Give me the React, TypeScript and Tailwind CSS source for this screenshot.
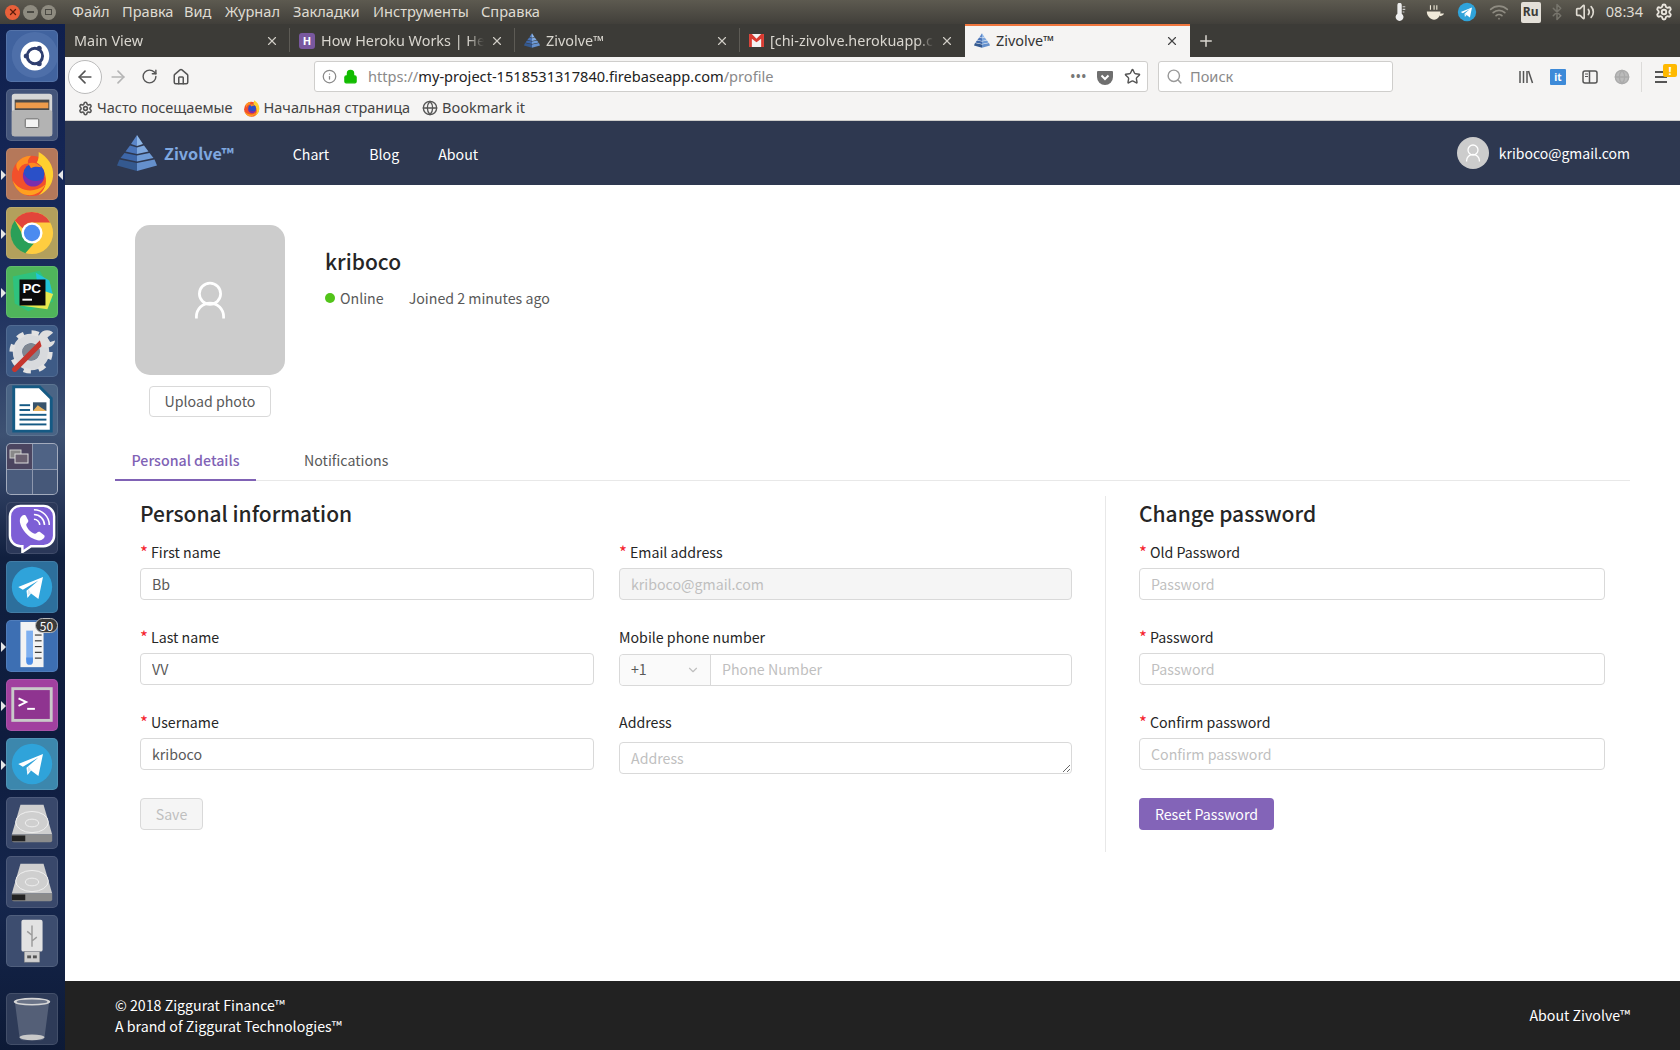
import React from 'react';
import {
  ArrowLeft,
  ArrowRight,
  Bluetooth,
  ChevronDown,
  Globe,
  Home,
  Info,
  Lock,
  Plus,
  RotateCw,
  Search,
  Settings,
  Star,
  Volume2,
  Wifi,
  X,
} from 'lucide-react';

const Pyramid = ({ className }: { className: string }) => (
  <svg viewBox="0 0 40 36" className={className}>
    <polygon points="20,0 14,9 20,11" fill="#5b86c9" />
    <polygon points="20,0 26,9 20,11" fill="#8fb6e6" />
    <polygon points="13,10.5 20,12.5 20,19 8.5,16.5" fill="#4a74b8" />
    <polygon points="27,10.5 20,12.5 20,19 31.5,16.5" fill="#7fa8de" />
    <polygon points="7.5,18 20,20.5 20,26.5 3.5,23" fill="#3d66a8" />
    <polygon points="32.5,18 20,20.5 20,26.5 36.5,23" fill="#6f9bd6" />
    <polygon points="2.5,24.5 20,28 20,36 0,30.5" fill="#34598f" />
    <polygon points="37.5,24.5 20,28 20,36 40,30.5" fill="#6590cc" />
  </svg>
);

const FirefoxGlyph = ({ size }: { size: number }) => (
  <svg viewBox="0 0 48 48" width={size} height={size}>
    <circle cx="24" cy="26" r="21" fill="#f2502b" />
    <path d="M31 1c9 5 16 14 15 25-1 10-7 17-15 20 6-5 9-12 7-20-1-6-4-11-9-14 2-3 2-7 2-11z" fill="#ffd02e" />
    <path d="M8 13c3-5 9-8 15-8-3 3-4 6-3 8-5 0-9 3-10 8-2-2-3-5-2-8z" fill="#ff9022" />
    <circle cx="26" cy="24" r="11" fill="#2a50c8" />
    <path d="M15 22c2 7 8 10 15 9 3 0 5-2 7-4-1 6-7 11-14 10-6-1-10-8-8-15z" fill="#7a2eae" />
    <path d="M20 13c5-2 11 0 14 4-4-1-8-1-11 1z" fill="#ff8a1f" />
    <path d="M4 31c6 10 21 15 34 4-4 8-11 12-19 11C11 45 6 38 4 31z" fill="#ffa01f" />
  </svg>
);

const TelegramGlyph = ({ size }: { size: number }) => (
  <svg viewBox="0 0 48 48" width={size} height={size}>
    <circle cx="24" cy="24" r="22" fill="#2fa3da" />
    <path d="M9 24l27-11-5 24-8-6-4 5-1-8 13-11-17 10z" fill="#fff" />
    <path d="M19 33l1-7 3 5z" fill="#d5e8f3" />
  </svg>
);

const Tile = ({
  bg,
  children,
  className = '',
  running,
}: {
  bg: string;
  children: React.ReactNode;
  className?: string;
  running?: boolean;
}) => (
  <div className={`relative w-[52px] h-[52px] rounded-[5px] flex items-center justify-center border border-white/10 ${bg} ${className}`}>
    {children}
    {running && (
      <span className="absolute -left-[6px] top-[21px] w-0 h-0 border-y-[5px] border-y-transparent border-l-[5px] border-l-[#e6e6e6]" />
    )}
  </div>
);

const DiskIcon = () => (
  <svg viewBox="0 0 52 52" width="52" height="52">
    <path d="M14 7h24l9 31H5z" fill="#cfcfcf" />
    <path d="M5 38h42v6a2 2 0 0 1-2 2H7a2 2 0 0 1-2-2z" fill="#8c8c8c" />
    <rect x="5" y="39" width="14" height="6" fill="#222" />
    <ellipse cx="26" cy="25" rx="17" ry="11" fill="none" stroke="#f0f0f0" strokeWidth="1" />
    <ellipse cx="26" cy="26" rx="7" ry="4" fill="none" stroke="#efefef" strokeWidth="1" />
  </svg>
);

const launcherTop = [
  <Tile key="ubuntu" bg="bg-[#41639f]">
    <svg viewBox="0 0 52 52" width="50" height="50">
      <circle cx="29" cy="25" r="24" fill="#5b7bb4" opacity="0.5" />
      <circle cx="29" cy="26" r="15" fill="#fff" />
      <circle cx="29" cy="26" r="8" fill="none" stroke="#2f3f70" strokeWidth="3" />
      <circle cx="20" cy="26" r="2.6" fill="#2f3f70" />
      <circle cx="33.5" cy="18" r="2.6" fill="#2f3f70" />
      <circle cx="33.5" cy="34" r="2.6" fill="#2f3f70" />
    </svg>
  </Tile>,
  <Tile key="files" bg="bg-[#43547a]">
    <svg viewBox="0 0 52 52" width="50" height="50">
      <rect x="5" y="4" width="42" height="44" rx="3" fill="#d6d6d6" />
      <rect x="8" y="10" width="36" height="11" fill="#4a4a4a" />
      <rect x="9" y="13" width="34" height="6" fill="#ee9b4b" />
      <rect x="5" y="21" width="42" height="27" rx="2" fill="#b3b3b3" />
      <rect x="19" y="30" width="14" height="9" rx="1" fill="#f2f2f2" stroke="#666" />
    </svg>
  </Tile>,
  <Tile key="firefox" bg="bg-[#b5785a]" running>
    <FirefoxGlyph size={46} />
    <span className="absolute -right-[6px] top-[21px] w-0 h-0 border-y-[5px] border-y-transparent border-r-[5px] border-r-[#e6e6e6]" />
  </Tile>,
  <Tile key="chrome" bg="bg-[#b3a05c]" running>
    <svg viewBox="0 0 48 48" width="46" height="46">
      <circle cx="24" cy="24" r="22" fill="#ffcd40" />
      <path d="M24 2a22 22 0 0 1 19 11H24a11 11 0 0 0-10 6L6 11A22 22 0 0 1 24 2z" fill="#e2453a" />
      <path d="M6 11l9 16a11 11 0 0 0 11 8l-9 10A22 22 0 0 1 6 11z" fill="#2a9f58" />
      <circle cx="24" cy="24" r="11" fill="#fff" />
      <circle cx="24" cy="24" r="8.5" fill="#4b8bf0" />
    </svg>
  </Tile>,
  <Tile key="pycharm" bg="bg-[#4fb55b]" running>
    <svg viewBox="0 0 52 52" width="50" height="50">
      <polygon points="6,10 34,4 44,20 48,36 22,46 8,38" fill="#2ec27e" />
      <polygon points="30,6 44,14 48,30 32,22" fill="#21c4d8" />
      <polygon points="14,40 42,44 48,28 30,22" fill="#e8ea4e" />
      <rect x="13" y="13" width="27" height="27" fill="#0b0b0b" />
      <text x="16" y="27" fill="#fff" fontSize="14" fontWeight="700" fontFamily="'Liberation Sans', sans-serif">PC</text>
      <rect x="16" y="33" width="10" height="2" fill="#fff" />
    </svg>
  </Tile>,
  <Tile key="settings" bg="bg-[#3e5b86]">
    <svg viewBox="0 0 52 52" width="50" height="50">
      <circle cx="25" cy="27" r="14" fill="none" stroke="#d8dadd" strokeWidth="10" />
      <circle cx="25" cy="27" r="20" fill="none" stroke="#e2e2e2" strokeWidth="5" strokeDasharray="7.5 8.2" />
      <circle cx="25" cy="27" r="9" fill="#7f8690" />
      <path d="M8 45L37 16" stroke="#c5362e" strokeWidth="5.5" strokeLinecap="round" />
      <path d="M33 11a9 9 0 0 1 15-4l-6 5 2 5 6-2a9 9 0 0 1-14 6z" fill="#dedede" />
    </svg>
  </Tile>,
  <Tile key="writer" bg="bg-[#4a6485]">
    <svg viewBox="0 0 52 52" width="50" height="50">
      <path d="M7 2h27l12 12v34H7z" fill="#fff" stroke="#155a84" strokeWidth="3" />
      <rect x="27" y="18" width="14" height="9" fill="#37536b" />
      <path d="M27 27l5-6 4 3 5 3z" fill="#e9b25c" />
      {[20, 25].map((y) => (
        <rect key={y} x="13" y={y} width="11" height="2" fill="#155a84" />
      ))}
      {[30, 35, 40].map((y) => (
        <rect key={y} x="13" y={y} width="28" height="2" fill="#155a84" />
      ))}
    </svg>
  </Tile>,
  <div key="workspaces" className="w-[52px] h-[52px] rounded-[5px] border border-white/20 bg-[#8d97ad] grid grid-cols-2 grid-rows-2 gap-px overflow-hidden">
    <div className="bg-[#4b4560] flex items-center justify-center">
      <svg viewBox="0 0 22 22" width="22" height="22">
        <rect x="2" y="5" width="11" height="8" fill="#888" stroke="#ccc" />
        <rect x="7" y="9" width="13" height="9" fill="#6a6070" stroke="#ddd" />
      </svg>
    </div>
    <div className="bg-[#4f6385]" />
    <div className="bg-[#4a5c7d]" />
    <div className="bg-[#465879]" />
  </div>,
  <Tile key="viber" bg="bg-[#2b3859]">
    <svg viewBox="0 0 52 52" width="50" height="50">
      <path d="M14 3h24a11 11 0 0 1 11 11v20a11 11 0 0 1-11 11H25l-9 6v-6h-2A11 11 0 0 1 3 34V14A11 11 0 0 1 14 3z" fill="#7d5fd6" stroke="#fff" strokeWidth="2.5" />
      <path d="M15 14c2-2 4-2 5 0l2 4c1 2-2 3-2 5 1 4 5 8 9 9 2 0 3-3 5-2l4 3c2 1 1 3 0 4-3 3-7 2-11 0-6-3-11-9-13-15-1-3-1-6 1-8z" fill="#fff" />
      <path d="M28 12a11 11 0 0 1 11 11M28 17a6 6 0 0 1 6 6M28 7a16 16 0 0 1 16 16" fill="none" stroke="#fff" strokeWidth="1.6" />
    </svg>
  </Tile>,
  <Tile key="telegram" bg="bg-[#2d6f9c]">
    <TelegramGlyph size={44} />
  </Tile>,
  <div key="thermo" className="relative">
    <Tile bg="bg-[#3d6fb3]" running>
      <svg viewBox="0 0 52 52" width="50" height="50">
        <rect x="14" y="1" width="24" height="47" fill="#f3f3f3" />
        <rect x="20" y="10" width="7" height="31" fill="#7fb0f0" />
        <path d="M20 38h7v4a3.5 3.5 0 0 1-7 0z" fill="#4f8fe8" />
        {[14, 20, 26, 32, 38].map((y) => (
          <rect key={y} x="29" y={y} width="7" height="1.2" fill="#333" />
        ))}
      </svg>
    </Tile>
    <span className="absolute -top-[2px] right-0 w-[23px] h-[15px] rounded-full bg-[#3a3a3a] border border-[#bbb] text-white text-[12px] leading-[13px] text-center">
      50
    </span>
  </div>,
  <Tile key="terminal" bg="bg-[#a1409f]" running>
    <svg viewBox="0 0 52 52" width="50" height="50">
      <rect x="6" y="9" width="40" height="33" fill="#8f3490" stroke="#c9c9c9" strokeWidth="3" />
      <path d="M12 19l8 4-8 4" fill="none" stroke="#fff" strokeWidth="2" />
      <rect x="21" y="29" width="8" height="2" fill="#fff" />
    </svg>
  </Tile>,
  <Tile key="telegram2" bg="bg-[#3c87ad]" running>
    <TelegramGlyph size={44} />
  </Tile>,
  <Tile key="disk1" bg="bg-[#39486b]">
    <DiskIcon />
  </Tile>,
  <Tile key="disk2" bg="bg-[#39486b]">
    <DiskIcon />
  </Tile>,
  <Tile key="usb" bg="bg-[#3d4d6f]">
    <svg viewBox="0 0 52 52" width="50" height="50">
      <rect x="15" y="4" width="22" height="33" rx="2" fill="#e2e2e2" />
      <rect x="18" y="37" width="16" height="11" fill="#cfcfcf" stroke="#888" strokeWidth="0.5" />
      <rect x="21" y="41" width="4" height="3" fill="#555" />
      <rect x="27" y="41" width="4" height="3" fill="#555" />
      <path d="M26 10v22M26 20l-5-4M26 26l5-4" stroke="#9a9a9a" strokeWidth="1.5" fill="none" />
    </svg>
  </Tile>,
];

const Launcher = () => (
  <aside className="w-[65px] shrink-0 flex flex-col items-start pt-[6px] pb-[5px] pl-[6px] gap-[7px] bg-[linear-gradient(180deg,#0f1f4d_0%,#1a2c5c_25%,#3d5172_40%,#2a3a5c_46%,#11203f_52%,#0e1c3e_70%,#15264d_85%,#0d1a36_100%)]">
    {launcherTop}
    <Tile bg="bg-[#2e3b58]" className="mt-auto">
      <svg viewBox="0 0 52 52" width="50" height="50">
        <path d="M8 7h36l-5 38a4 4 0 0 1-4 3H17a4 4 0 0 1-4-3z" fill="#9aa3b3" opacity="0.35" />
        <ellipse cx="26" cy="8" rx="19" ry="4" fill="#d6d6d6" />
        <ellipse cx="26" cy="8" rx="16" ry="2.4" fill="#6b7488" />
        <ellipse cx="26" cy="45" rx="13" ry="3" fill="#c9c9c9" />
      </svg>
    </Tile>
  </aside>
);

const menu = [
  ['Файл', 'w-[50px]'],
  ['Правка', 'w-[62px]'],
  ['Вид', 'w-[41px]'],
  ['Журнал', 'w-[68px]'],
  ['Закладки', 'w-[80px]'],
  ['Инструменты', 'w-[108px]'],
  ['Справка', 'w-[70px]'],
];

const TopBar = () => (
  <header className="h-[24px] flex items-center bg-[linear-gradient(180deg,#5d5a50,#413f3a)] text-[#dfdbd2] font-['Noto_Sans',sans-serif] text-[14.6px]">
    <div className="w-[72px] pl-[5px] flex items-center gap-[3px]">
      <span className="w-[15px] h-[15px] rounded-full bg-[#e9603a] text-[#5c1d0c] flex items-center justify-center">
        <X size={10} strokeWidth={3} />
      </span>
      <span className="w-[15px] h-[15px] rounded-full bg-[#8e8b80] flex items-center justify-center">
        <span className="w-[7px] h-[2px] bg-[#4b4a44]" />
      </span>
      <span className="w-[15px] h-[15px] rounded-full bg-[#8e8b80] flex items-center justify-center">
        <span className="w-[7px] h-[6px] border border-[#4b4a44]" />
      </span>
    </div>
    {menu.map(([label, width]) => (
      <span key={label} className={width}>
        {label}
      </span>
    ))}
    <div className="ml-auto flex items-center h-full pr-[7px]">
      <svg viewBox="0 0 16 20" width="14" height="18" className="mr-[18px]">
        <path d="M5 2a2.5 2.5 0 0 1 5 0v10a4.5 4.5 0 1 1-5 0z" fill="#eee" />
        <path d="M11 4h3M11 7h3M11 10h2" stroke="#ccc" strokeWidth="1.2" />
      </svg>
      <svg viewBox="0 0 22 18" width="20" height="17" className="mr-[12px]">
        <path d="M2 8h15c0 5-3 9-7 9S2 13 2 8z" fill="#efe9d8" />
        <path d="M16 10h5c-1 2-3 3-5 3z" fill="#efe9d8" />
        <path d="M6 1v5M10 1v5M13 1v5" stroke="#efe9d8" strokeWidth="1.2" />
      </svg>
      <TelegramGlyph size={20} />
      <Wifi size={20} className="ml-[12px] text-[#8f8c82]" />
      <span className="ml-[12px] w-[20px] h-[21px] rounded-[2px] bg-[#e4e0d8] text-[#3c3b37] text-[12px] font-bold flex items-center justify-center">
        Ru
      </span>
      <Bluetooth size={18} className="ml-[7px] text-[#77756c]" />
      <Volume2 size={20} className="ml-[9px] text-[#dfdbd2]" />
      <span className="ml-[11px] text-[14.6px]">08:34</span>
      <Settings size={18} strokeWidth={2.5} className="ml-[12px] text-[#e8e4dc]" />
    </div>
  </header>
);

const tabs: { title: string; icon: React.ReactNode }[] = [
  { title: 'Main View', icon: null },
  {
    title: 'How Heroku Works | He',
    icon: (
      <span className="w-[16px] h-[16px] rounded-[3px] bg-[#79589f] text-white text-[11px] font-bold leading-[16px] text-center shrink-0">
        H
      </span>
    ),
  },
  { title: 'Zivolve™', icon: <Pyramid className="w-[16px] h-[15px] shrink-0" /> },
  {
    title: '[chi-zivolve.herokuapp.c',
    icon: (
      <svg viewBox="0 0 16 14" width="15" height="13" className="shrink-0">
        <rect width="16" height="14" fill="#f2f2f2" />
        <path d="M0 0h3l5 5 5-5h3v14h-3V5L8 9 3 5v9H0z" fill="#d93a30" />
      </svg>
    ),
  },
];

const TabStrip = () => (
  <div className="h-[33px] flex bg-[#3c3b37] text-[14.4px] font-['Noto_Sans',sans-serif] text-[#d9d6cf]">
    {tabs.map((tab, i) => (
      <div key={i} className="relative w-[225px] flex items-center pl-[9px] pr-[11px] gap-[6px]">
        {tab.icon}
        <span className="flex-1 min-w-0 whitespace-nowrap overflow-hidden [mask-image:linear-gradient(to_right,black_90%,transparent)]">
          {tab.title}
        </span>
        <X size={14} className="text-[#cfccc5] shrink-0" />
        {i < 3 && <span className="absolute right-0 top-[4px] w-px h-[24px] bg-[#5d5b55]" />}
      </div>
    ))}
    <div className="w-[225px] flex items-center pl-[9px] pr-[11px] pb-[2px] gap-[6px] bg-[#f5f4f3] border-t-2 border-[#f0763e] text-[#333]">
      <Pyramid className="w-[16px] h-[15px] shrink-0" />
      <span className="flex-1">Zivolve™</span>
      <X size={14} className="text-[#444]" />
    </div>
    <Plus size={18} className="ml-[7px] mt-[8px] text-[#d9d6cf]" />
  </div>
);

const Toolbar = () => (
  <div className="h-[39px] flex items-center bg-[#f5f4f3] text-[#555] font-['Noto_Sans',sans-serif]">
    <div className="w-[34px] h-[34px] ml-[3px] rounded-full bg-white border border-[#bbb] flex items-center justify-center shrink-0">
      <ArrowLeft size={20} className="text-[#555]" />
    </div>
    <ArrowRight size={20} className="ml-[6px] text-[#b5b5b5]" />
    <RotateCw size={17} className="ml-[13px]" />
    <Home size={18} className="ml-[14px]" />
    <div className="ml-[124px] w-[834px] h-[31px] bg-white border border-[#cfcecc] rounded-[3px] flex items-center pl-[3px] pr-[6px] shrink-0">
      <Info size={15} className="ml-[4px] text-[#888]" />
      <Lock size={15} className="ml-[6px] text-[#12bc00] fill-[#12bc00]" />
      <span className="ml-[10px] text-[14.6px] whitespace-nowrap text-[#8a8a8a]">
        https://<span className="text-[#222]">my-project-1518531317840.firebaseapp.com</span>/profile
      </span>
      <span className="ml-auto text-[#777] tracking-[1px] text-[12px] font-bold">•••</span>
      <svg viewBox="0 0 16 16" width="16" height="16" className="ml-[10px]">
        <path d="M1 2h14a1 1 0 0 1 1 1v5a8 8 0 0 1-16 0V3a1 1 0 0 1 1-1z" fill="#6f6f6f" />
        <path d="M4.5 6.5L8 10l3.5-3.5" stroke="#fff" strokeWidth="2" fill="none" />
      </svg>
      <Star size={17} className="ml-[11px] text-[#555]" />
    </div>
    <div className="ml-[10px] w-[235px] h-[31px] bg-white border border-[#cfcecc] rounded-[3px] flex items-center pl-[7px] text-[14.6px] text-[#8a8a8a] shrink-0">
      <Search size={17} className="text-[#999]" />
      <span className="ml-[7px]">Поиск</span>
    </div>
    <div className="ml-auto flex items-center pr-[13px]">
      <svg viewBox="0 0 16 16" width="16" height="16" className="text-[#555]">
        <path d="M2 2v12M5.5 2v12M9 2v12M10.5 2l4 12" stroke="currentColor" strokeWidth="1.5" fill="none" />
      </svg>
      <span className="ml-[16px] w-[16px] h-[16px] rounded-[1px] bg-[#3d8ad8] text-white text-[10px] font-bold leading-[16px] text-center">it</span>
      <svg viewBox="0 0 16 16" width="16" height="16" className="ml-[16px]">
        <rect x="1" y="2" width="14" height="12" rx="2" fill="none" stroke="#555" strokeWidth="1.5" />
        <path d="M7.5 2v12" stroke="#555" strokeWidth="1.5" />
        <path d="M3 5h3M3 7.5h3" stroke="#555" strokeWidth="1" />
      </svg>
      <Globe size={16} className="ml-[16px] text-[#aaa] fill-[#bbb]" />
      <span className="ml-[11px] w-px h-[30px] bg-[#dcdbd9]" />
      <span className="relative ml-[13px] flex flex-col gap-[3px]">
        <span className="w-[12px] h-[2px] bg-[#555]" />
        <span className="w-[12px] h-[2px] bg-[#555]" />
        <span className="w-[12px] h-[2px] bg-[#555]" />
        <span className="absolute -top-[7px] left-[8px] w-[14px] h-[13px] rounded-[2px] bg-[#ffb900] text-white text-[11px] font-bold leading-[13px] text-center">!</span>
      </span>
    </div>
  </div>
);

const Bookmarks = () => (
  <div className="h-[25px] flex items-center pl-[13px] bg-[#f5f4f3] border-b border-[#cdccca] text-[14.5px] text-[#444] font-['Noto_Sans',sans-serif]">
    <Settings size={15} strokeWidth={2.5} className="mr-[4px] text-[#555]" />
    <span>Часто посещаемые</span>
    <span className="ml-[10px] mr-[4px] flex">
      <FirefoxGlyph size={17} />
    </span>
    <span>Начальная страница</span>
    <Globe size={16} className="ml-[12px] mr-[4px] text-[#555]" />
    <span>Bookmark it</span>
  </div>
);

const AvatarGlyph = ({ size }: { size: number }) => (
  <svg viewBox="0 0 40 44" width={size} height={size * 1.1} fill="none" stroke="#fff" strokeWidth="3.2">
    <circle cx="20" cy="15" r="12.5" />
    <path d="M4 44v-2a16 16 0 0 1 32 0v2" />
  </svg>
);

const Navbar = () => (
  <nav className="h-[64px] bg-[#2e3850] flex items-center pl-[52px] pr-[50px] text-white">
    <Pyramid className="w-[40px] h-[36px]" />
    <span className="ml-[7px] text-[16.2px] font-semibold text-[#7fa8e0]">Zivolve™</span>
    <span className="ml-[59px] mt-[3px]">Chart</span>
    <span className="ml-[40px] mt-[3px]">Blog</span>
    <span className="ml-[39px] mt-[3px]">About</span>
    <span className="ml-auto w-[32px] h-[32px] rounded-full bg-[#ccc] flex items-center justify-center">
      <AvatarGlyph size={16} />
    </span>
    <span className="ml-[10px] text-[14px]">kriboco@gmail.com</span>
  </nav>
);

const Field = ({
  label,
  required,
  className = '',
  children,
}: {
  label: string;
  required?: boolean;
  className?: string;
  children: React.ReactNode;
}) => (
  <div className="h-[60px] mb-[25px]">
    <div className="h-[24px] leading-[24px] text-[#262626]">
      {required && <span className="text-[#f5222d] text-[17px] leading-none mr-[3px] align-[-1px]">*</span>}
      {label}
    </div>
    <div className={`mt-[4px] ${className}`}>{children}</div>
  </div>
);

const inputClass =
  'block w-full h-[32px] px-[11px] pb-[1px] border border-[#d9d9d9] rounded-[4px] bg-white text-[#595959] placeholder:text-[#bfbfbf] outline-none';

const Input = ({ value, placeholder }: { value?: string; placeholder?: string }) => (
  <input className={inputClass} defaultValue={value} placeholder={placeholder} />
);

const ProfileHeader = () => (
  <section className="flex pl-[20px] pt-[40px]">
    <div className="w-[150px] flex flex-col items-center">
      <div className="w-[150px] h-[150px] rounded-[15px] bg-[#ccc] flex items-center justify-center">
        <AvatarGlyph size={34} />
      </div>
      <button className="mt-[11px] w-[122px] h-[31px] border border-[#d9d9d9] rounded-[4px] bg-white text-[#595959]">
        Upload photo
      </button>
    </div>
    <div className="ml-[40px]">
      <h1 className="mt-[20px] h-[32px] leading-[32px] text-[21px] font-medium text-[#262626]">kriboco</h1>
      <div className="mt-[6px] h-[32px] flex items-center text-[#595959]">
        <span className="w-[10px] h-[10px] rounded-full bg-[#52c41a] mr-[5px] -mt-[2px]" />
        Online
        <span className="ml-[25px]">Joined 2 minutes ago</span>
      </div>
    </div>
  </section>
);

const Tabs = () => (
  <div className="mt-[27px] flex h-[37px] border-b border-[#e8e8e8]">
    <div className="h-[37px] w-[141px] pb-[1px] flex items-center justify-center border-b-2 border-[#8062b5] text-[#8062b5] font-medium">
      Personal details
    </div>
    <div className="h-[36px] ml-[32px] px-[16px] pb-[2px] flex items-center text-[#595959]">Notifications</div>
  </div>
);

const PersonalInfo = () => (
  <div className="w-[991px] pl-[25px] pr-[33px] border-r border-[#e8e8e8] h-[356px]">
    <h2 className="h-[34px] leading-[34px] mb-[10px] text-[21px] font-medium text-[#262626]">Personal information</h2>
    <div className="grid grid-cols-[454px_453px] gap-x-[25px]">
      <div>
        <Field label="First name" required>
          <Input value="Bb" />
        </Field>
        <Field label="Last name" required>
          <Input value="VV" />
        </Field>
        <Field label="Username" required>
          <Input value="kriboco" />
        </Field>
      </div>
      <div>
        <Field label="Email address" required>
          <input
            className="block w-full h-[32px] px-[11px] pb-[1px] border border-[#d9d9d9] rounded-[4px] bg-[#f5f5f5] text-[#bfbfbf] outline-none"
            defaultValue="kriboco@gmail.com"
            disabled
          />
        </Field>
        <Field label="Mobile phone number" className="mt-[5px]">
          <div className="flex h-[32px] border border-[#d9d9d9] rounded-[4px]">
            <div className="w-[91px] shrink-0 flex items-center justify-between pl-[11px] pr-[10px] bg-[#fafafa] border-r border-[#d9d9d9] rounded-l-[4px] text-[#595959]">
              +1
              <ChevronDown size={14} className="text-[#bfbfbf]" />
            </div>
            <input className="flex-1 min-w-0 px-[11px] outline-none bg-transparent placeholder:text-[#bfbfbf]" placeholder="Phone Number" />
          </div>
        </Field>
        <Field label="Address" className="mt-[8px]">
          <textarea className="block w-full h-[32px] px-[11px] py-[4px] leading-[22px] border border-[#d9d9d9] rounded-[4px] bg-white text-[#595959] placeholder:text-[#bfbfbf] outline-none" placeholder="Address" />
        </Field>
      </div>
    </div>
    <button disabled className="mt-[3px] w-[63px] h-[32px] pt-[1px] border border-[#d9d9d9] rounded-[4px] bg-[#f5f5f5] text-[#bfbfbf]">
      Save
    </button>
  </div>
);

const ChangePassword = () => (
  <div className="flex-1 pl-[33px] pr-[25px]">
    <h2 className="h-[34px] leading-[34px] mb-[10px] text-[21px] font-medium text-[#262626]">Change password</h2>
    <Field label="Old Password" required>
      <Input placeholder="Password" />
    </Field>
    <Field label="Password" required>
      <Input placeholder="Password" />
    </Field>
    <Field label="Confirm password" required>
      <Input placeholder="Confirm password" />
    </Field>
    <button className="mt-[3px] w-[135px] h-[32px] pt-[1px] rounded-[4px] bg-[#8364b8] text-white">Reset Password</button>
  </div>
);

export default function App() {
  return (
    <div className="w-[1680px] h-[1050px] overflow-hidden flex flex-col font-['Noto_Sans_CJK_SC','Noto_Sans',sans-serif] text-[14.2px]">
      <TopBar />
      <div className="flex-1 min-h-0 flex">
        <Launcher />
        <div className="flex-1 min-w-0 flex flex-col bg-white">
          <TabStrip />
          <Toolbar />
          <Bookmarks />
          <Navbar />
          <main className="flex-1 min-h-0 px-[50px]">
            <ProfileHeader />
            <Tabs />
            <div className="mt-[15px] flex">
              <PersonalInfo />
              <ChangePassword />
            </div>
          </main>
          <footer className="h-[69px] bg-[#222] text-white flex items-center justify-between px-[50px] leading-[21px]">
            <div>
              <div>© 2018 Ziggurat Finance™</div>
              <div>A brand of Ziggurat Technologies™</div>
            </div>
            <div>About Zivolve™</div>
          </footer>
        </div>
      </div>
    </div>
  );
}
